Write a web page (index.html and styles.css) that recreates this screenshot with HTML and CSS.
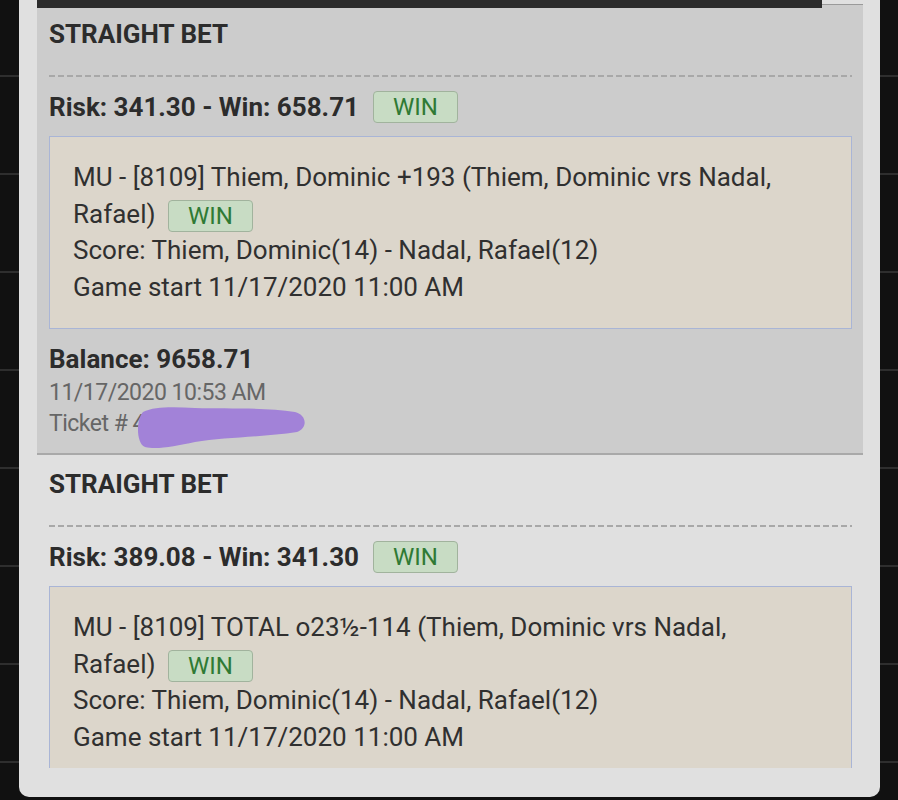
FILE: index.html
```html
<!DOCTYPE html>
<html>
<head>
    <meta charset="utf-8">
    <meta name="viewport" content="width=device-width, initial-scale=1">
    <title>Bet history</title>
    <link rel="stylesheet" href="styles.css">
</head>
<body>
    <div class="panel">
        <div class="topbar"></div>
        <div class="bets">

            <div class="bet bet-graded">
                <div class="bet-type">STRAIGHT BET</div>
                <div class="dash"></div>
                <div class="risk-row">
                    <span class="risk">Risk: 341.30 - Win: 658.71</span>
                    <span class="badge">WIN</span>
                </div>
                <div class="bet-detail">
                    <div>MU - [8109] Thiem, Dominic +193 (Thiem, Dominic vrs Nadal, Rafael) <span class="badge">WIN</span></div>
                    <div>Score: Thiem, Dominic(14) - Nadal, Rafael(12)</div>
                    <div>Game start 11/17/2020 11:00 AM</div>
                </div>
                <div class="balance">Balance: 9658.71</div>
                <div class="meta">11/17/2020 10:53 AM</div>
                <div class="meta ticket">Ticket # 4
                    <svg class="scribble" width="174" height="46" viewBox="0 0 174 46">
                        <path d="M8 8 C20 2 40 3 60 4 C90 5 130 3 160 8 C172 11 173 24 162 28 C130 33 90 33 60 38 C40 42 22 46 10 43 C1 40 1 15 8 8 Z" fill="#a282d8"/>
                    </svg>
                </div>
            </div>

            <div class="bet">
                <div class="bet-type">STRAIGHT BET</div>
                <div class="dash"></div>
                <div class="risk-row">
                    <span class="risk">Risk: 389.08 - Win: 341.30</span>
                    <span class="badge">WIN</span>
                </div>
                <div class="bet-detail">
                    <div>MU - [8109] TOTAL o23½-114 (Thiem, Dominic vrs Nadal, Rafael) <span class="badge">WIN</span></div>
                    <div>Score: Thiem, Dominic(14) - Nadal, Rafael(12)</div>
                    <div>Game start 11/17/2020 11:00 AM</div>
                </div>
            </div>

        </div>
    </div>
</body>
</html>
```

FILE: styles.css
```css
:root {
    --page-bg: #111111;
    --panel-bg: #e0e0e0;
    --card-bg: #cccccc;
    --detail-bg: #dcd6cb;
    --detail-border: #a9b5d6;
    --text-dark: #2c2c2c;
    --text-grey: #666666;
    --win-bg: #c8dcc4;
    --win-border: #a1b39d;
    --win-text: #2f7a34;
}

* {
    margin: 0;
    padding: 0;
    box-sizing: border-box;
}

body {
    height: 800px;
    overflow: hidden;
    font-family: Roboto, 'Liberation Sans', sans-serif;
    color: var(--text-dark);
    background-color: var(--page-bg);
    background-image: repeating-linear-gradient(to bottom, transparent 0 75px, #2e2e2e 75px 77px, transparent 77px 98px);
}

.panel {
    position: relative;
    width: 861px;
    height: 797px;
    margin-left: 19px;
    padding: 0 17px 29px 18px;
    background-color: var(--panel-bg);
    border-radius: 0 0 10px 10px;
}

/* header bar left half-scrolled over the list */
.topbar {
    position: absolute;
    left: 18px;
    top: 0;
    width: 785px;
    height: 8px;
    background-color: #2b2b2b;
    z-index: 2;
}

.bets {
    height: 768px;
    overflow: hidden;
    padding-top: 4px;
}

.bet {
    padding: 14px 11px 0 12px;
}

.bet-graded {
    background-color: var(--card-bg);
    border-top: 1px solid #9a9a9a;
    border-bottom: 2px solid #a9a9a9;
    padding-bottom: 14px;
}

.bet-type {
    font-size: 26px;
    font-weight: 700;
    line-height: 30px;
}

.dash {
    height: 2px;
    margin: 26px 0 14px;
    background-image: repeating-linear-gradient(to right, #a8a8a8 0 6px, transparent 6px 9px);
}

.risk-row {
    display: flex;
    align-items: center;
    gap: 14px;
    height: 32px;
}

.risk {
    font-size: 26px;
    font-weight: 700;
    line-height: 30px;
}

.badge {
    display: inline-block;
    padding: 0 19px;
    height: 32px;
    line-height: 30px;
    font-size: 24px;
    color: var(--win-text);
    background-color: var(--win-bg);
    border: 1px solid var(--win-border);
    border-radius: 4px;
    vertical-align: middle;
}

.bet-detail {
    margin-top: 13px;
    padding: 22px 50px 23px 23px;
    font-size: 26px;
    line-height: 36.5px;
    color: #303030;
    background-color: var(--detail-bg);
    border: 1px solid var(--detail-border);
}

.bet-detail .badge {
    margin-left: 6px;
    vertical-align: -1px;
}

.balance {
    margin-top: 15px;
    font-size: 26px;
    font-weight: 700;
    line-height: 30px;
}

.meta {
    font-size: 23px;
    letter-spacing: -0.5px;
    line-height: 31px;
    color: var(--text-grey);
}

.balance + .meta {
    margin-top: 3px;
}

.ticket {
    position: relative;
}

.scribble {
    position: absolute;
    left: 86px;
    top: -4px;
}
```
